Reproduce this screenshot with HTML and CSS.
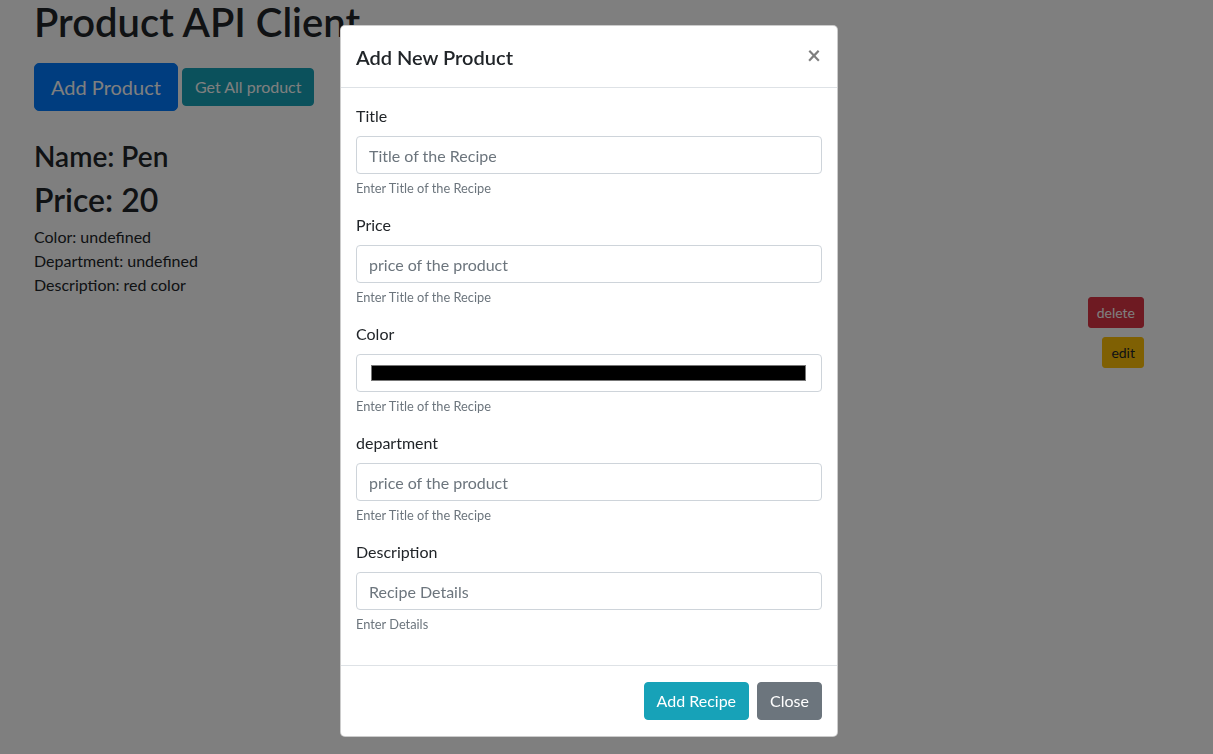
FILE: index.html
```html
<!DOCTYPE html>
<html lang="en">
<head>
<meta charset="utf-8">
<title>Product API Client</title>
<link rel="stylesheet" href="styles.css">
</head>
<body>
<div class="page">
  <h1 class="page-title">Product API Client</h1>
  <div class="actions">
    <button class="btn btn-lg btn-primary">Add Product</button>
    <button class="btn btn-info">Get All product</button>
  </div>
  <div class="product">
    <h3 class="product-name">Name: Pen</h3>
    <h2 class="product-price">Price: 20</h2>
    <p class="product-line">Color: undefined</p>
    <p class="product-line">Department: undefined</p>
    <p class="product-line">Description: red color</p>
    <div class="product-actions">
      <button class="btn btn-sm btn-danger">delete</button>
      <button class="btn btn-sm btn-warning">edit</button>
    </div>
  </div>
</div>

<div class="backdrop"></div>
<div class="modal">
  <div class="modal-dialog">
    <div class="modal-header">
      <h5 class="modal-title">Add New Product</h5>
      <button class="close-btn" aria-label="Close">&times;</button>
    </div>
    <div class="modal-body">
      <div class="form-group">
        <label class="form-label">Title</label>
        <input class="form-control" type="text" placeholder="Title of the Recipe">
        <small class="form-text">Enter Title of the Recipe</small>
      </div>
      <div class="form-group">
        <label class="form-label">Price</label>
        <input class="form-control" type="text" placeholder="price of the product">
        <small class="form-text">Enter Title of the Recipe</small>
      </div>
      <div class="form-group">
        <label class="form-label">Color</label>
        <div class="form-control color-control"><span class="color-swatch"></span></div>
        <small class="form-text">Enter Title of the Recipe</small>
      </div>
      <div class="form-group">
        <label class="form-label">department</label>
        <input class="form-control" type="text" placeholder="price of the product">
        <small class="form-text">Enter Title of the Recipe</small>
      </div>
      <div class="form-group">
        <label class="form-label">Description</label>
        <input class="form-control" type="text" placeholder="Recipe Details">
        <small class="form-text">Enter Details</small>
      </div>
    </div>
    <div class="modal-footer">
      <button class="btn btn-info">Add Recipe</button>
      <button class="btn btn-secondary">Close</button>
    </div>
  </div>
</div>
</body>
</html>
```

FILE: styles.css
```css
* { box-sizing: border-box; }

html, body {
  margin: 0;
  height: 100%;
}

body {
  font-family: "Lato", "Segoe UI", Roboto, sans-serif;
  font-size: 16px;
  line-height: 1.5;
  color: #212529;
  background: #fff;
  overflow: hidden;
}

.page {
  padding: 0 69px 0 34px;
}

.page-title {
  margin: -2px 0 0;
  font-size: 40px;
  font-weight: 600;
  line-height: 48px;
}

.actions {
  display: flex;
  align-items: center;
  gap: 4px;
  margin-top: 17px;
}

.btn {
  display: inline-block;
  font-family: inherit;
  font-size: 16px;
  line-height: 24px;
  padding: 6px 12px;
  border: 1px solid transparent;
  border-radius: 4px;
  color: #fff;
  cursor: pointer;
}

.btn-lg {
  font-size: 20px;
  line-height: 30px;
  padding: 8px 16px;
  border-radius: 5px;
}

.btn-sm {
  font-size: 14px;
  line-height: 21px;
  padding: 4px 8px;
  border-radius: 3px;
}

.btn-primary { background: #007bff; border-color: #007bff; }
.btn-info { background: #17a2b8; border-color: #17a2b8; }
.btn-secondary { background: #6c757d; border-color: #6c757d; }
.btn-danger { background: #dc3545; border-color: #dc3545; }
.btn-warning { background: #ffc107; border-color: #ffc107; color: #212529; }

.product {
  margin-top: 28px;
}

.product-name {
  margin: 0 0 8px;
  font-size: 28px;
  font-weight: 600;
  line-height: 34px;
}

.product-price {
  margin: 0 0 6px;
  font-size: 32px;
  font-weight: 600;
  line-height: 38px;
}

.product-line {
  margin: 0;
}

.product-actions {
  display: flex;
  flex-direction: column;
  align-items: flex-end;
  gap: 9px;
}

.backdrop {
  position: fixed;
  inset: 0;
  background: rgba(0, 0, 0, 0.5);
}

.modal {
  position: fixed;
  inset: 0;
}

.modal-dialog {
  margin: 25px 0 0 340px;
  width: 498px;
  background: #fff;
  border: 1px solid rgba(0, 0, 0, 0.2);
  border-radius: 5px;
}

.modal-header {
  display: flex;
  align-items: flex-start;
  justify-content: space-between;
  padding: 16px 15px 15px;
  border-bottom: 1px solid #dee2e6;
}

.modal-title {
  margin: 0;
  font-size: 20px;
  font-weight: 600;
  line-height: 30px;
}

.close-btn {
  padding: 0;
  margin: -2px 1px 0 0;
  border: 0;
  background: transparent;
  font-family: inherit;
  font-size: 24px;
  font-weight: 700;
  line-height: 30px;
  color: #000;
  opacity: 0.5;
}

.modal-body {
  padding: 16px 15px;
}

.form-group {
  margin-bottom: 16px;
}

.form-label {
  display: block;
  margin-bottom: 8px;
}

.form-control {
  display: block;
  width: 100%;
  height: 38px;
  padding: 6px 12px;
  font-family: inherit;
  font-size: 16px;
  line-height: 24px;
  color: #495057;
  background: #fff;
  border: 1px solid #ced4da;
  border-radius: 4px;
}

.form-control::placeholder {
  color: #6c757d;
  opacity: 1;
}

.color-control {
  padding: 10px 15px 10px 14px;
}

.color-swatch {
  display: block;
  height: 16px;
  background: #000;
  border: 1px solid #777;
}

.form-text {
  display: block;
  margin-top: 5px;
  font-size: 12.8px;
  line-height: 18px;
  color: #6c757d;
}

.modal-footer {
  display: flex;
  justify-content: flex-end;
  gap: 8px;
  padding: 16px 15px 16px;
  border-top: 1px solid #dee2e6;
}
```
